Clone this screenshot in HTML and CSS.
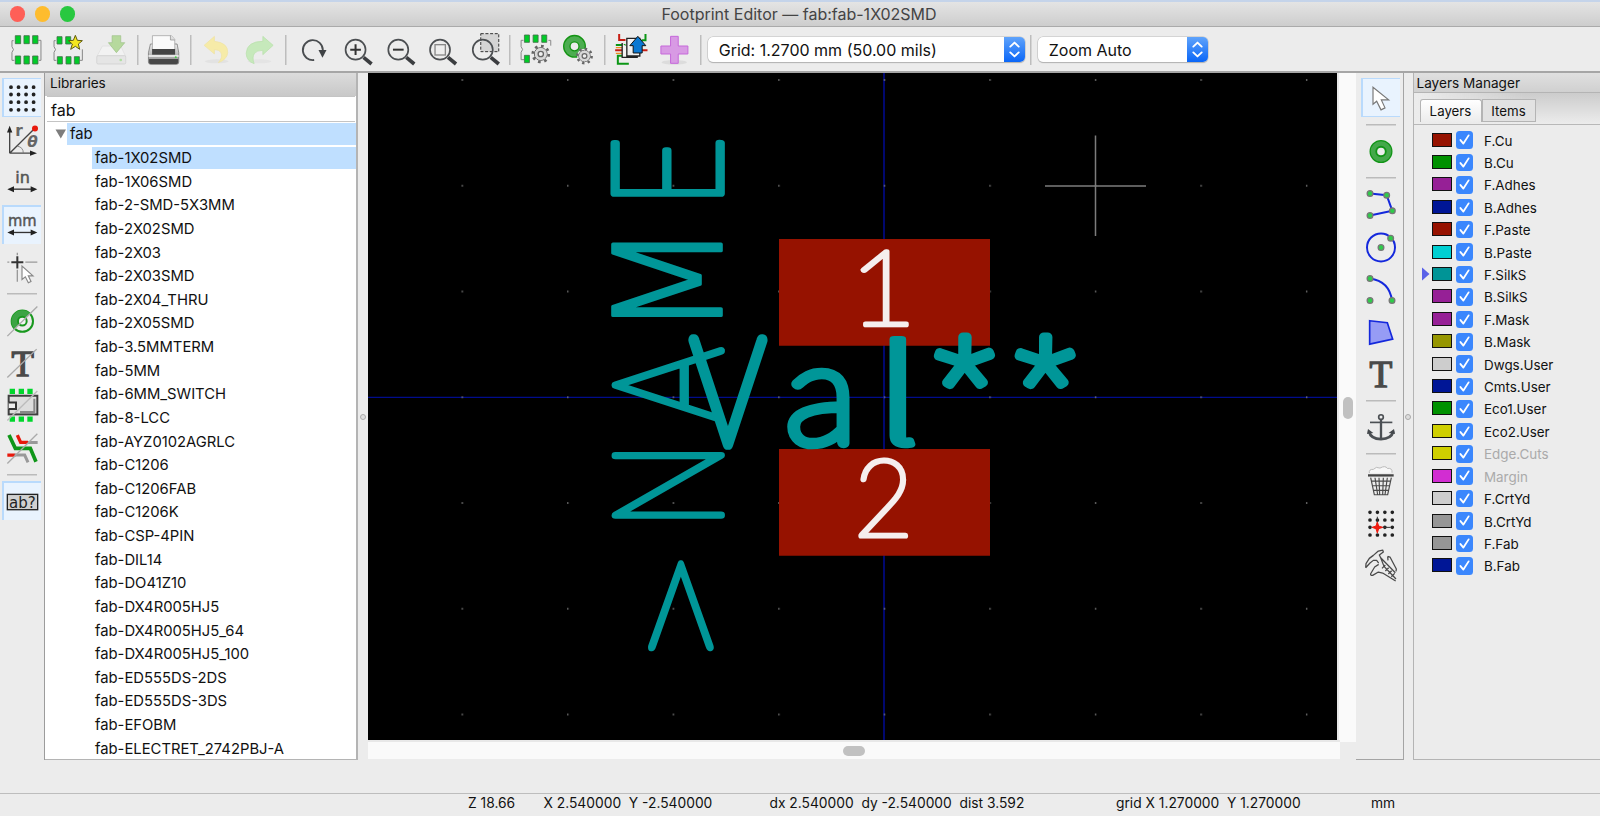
FILE: index.html
```html
<!DOCTYPE html>
<html lang="en">
<head>
<meta charset="utf-8">
<title>Footprint Editor — fab:fab-1X02SMD</title>
<link rel="stylesheet" href="styles.css">
</head>
<body>
<svg class="defs" aria-hidden="true">
  <symbol id="check" viewBox="0 0 18 18"><path d="M4.6 9.3l3 3.6 5.4-8.4" fill="none" stroke="#fff" stroke-width="1.9" stroke-linecap="round" stroke-linejoin="round"/></symbol>
  <symbol id="updown" viewBox="0 0 21 25"><path d="M6.3 9.6l4.2-4 4.2 4M6.3 15.4l4.2 4 4.2-4" fill="none" stroke="#fff" stroke-width="1.9" stroke-linecap="round" stroke-linejoin="round"/></symbol>
  <symbol id="gear" viewBox="-30 -30 60 60"><circle r="19" fill="#ddd" stroke="#555" stroke-width="3"/><circle r="24" fill="none" stroke="#666" stroke-width="8" stroke-dasharray="8 10.85"/><circle r="18" fill="#d8d8d8"/><circle r="8" fill="#eee" stroke="#666" stroke-width="4"/></symbol>
  <linearGradient id="printer" x2="0" y2="1"><stop offset="0" stop-color="#eee"/><stop offset="1" stop-color="#888"/></linearGradient>
</svg>
<div class="window">
  <header class="titlebar">
    <div class="lights"><i class="light red"></i><i class="light amber"></i><i class="light green"></i></div>
    <h1 class="title">Footprint Editor — fab:fab-1X02SMD</h1>
  </header>

  <nav class="toolbar">
    <svg class="tool" viewBox="14.1 102 127.8 96"><path d="M40 122H35V140Q44 149 35 157V181H42M114 121H122V181H116" fill="none" stroke="#888" stroke-width="3"/><path d="M45 107h16v24H45zM71 107h16v24H71zM97 107h16v24H97zM45 168h16v24H45zM71 168h16v24H71zM97 168h16v24H97z" fill="#00cc28" stroke="#44704a" stroke-width="2.5"/></svg>
    <svg class="tool" viewBox="141.9 102 127.8 96"><path d="M168 122H163V140Q172 149 163 157V181H170M248 148V181H240" fill="none" stroke="#888" stroke-width="3"/><path d="M172 110h15v22H172zM198 110h15v22H198zM173 170h15v22H173zM199 170h15v22H199zM224 170h15v22H224z" fill="#00cc28" stroke="#44704a" stroke-width="2.5"/><path d="M227 106l6 15 15 1-12 10 4 16-13-9-14 9 5-16-12-10 15-1z" fill="#f5e61e" stroke="#5d5a10" stroke-width="3"/></svg>
    <svg class="tool" viewBox="269.7 102 127.8 96"><path d="M307 138H362L376 168H291z" fill="#f2f2f2" stroke="#ddd" stroke-width="2"/><rect x="290" y="167" width="87" height="25" rx="4" fill="#e5e5e5" stroke="#ccc" stroke-width="2"/><circle cx="362" cy="180" r="4" fill="#b0dfa2"/><path d="M336 107H362V128H374L349 158 325 128H336z" fill="#b6d99d" stroke="#9dbf88" stroke-width="2"/></svg>
    <i class="sep"></i>
    <svg class="tool" viewBox="428.7 102 127.8 96"><path d="M451 132H531L536 158V186Q536 193 529 193H453Q445 193 445 186V158z" fill="url(#printer)" stroke="#666" stroke-width="2"/><path d="M457 107H514L524 118V150H457z" fill="#fafafa" stroke="#999" stroke-width="2"/><path d="M511 107V120H524" fill="#ddd" stroke="#888" stroke-width="2"/><rect x="456" y="147" width="69" height="17" fill="#444"/><path d="M445 168H536" stroke="#fff" stroke-width="4"/><path d="M447 177H534V185Q534 192 526 192H455Q447 192 447 185z" fill="#484848"/><circle cx="527" cy="172" r="3" fill="#4c4"/></svg>
    <i class="sep"></i>
    <svg class="tool" viewBox="587.7 102 127.8 96"><ellipse cx="650" cy="184" rx="36" ry="6" fill="#e2e2e2"/><path d="M612 136L643 109V124Q684 128 683 158 681 178 655 188 669 172 662 157 657 149 643 149V162z" fill="#f6eba8" stroke="#eee2a4" stroke-width="2"/></svg>
    <svg class="tool" viewBox="715.5 102 127.8 96"><ellipse cx="780" cy="184" rx="36" ry="6" fill="#e4e4e4"/><path d="M821 136L790 109V124Q742 124 740 160 741 184 764 191 757 172 765 160 772 151 790 151V164z" fill="#c6e9bb" stroke="#b6dfa9" stroke-width="2"/></svg>
    <i class="sep"></i>
    <svg class="tool" viewBox="4.5 102 127.8 96"><path d="M74 180A30 30 0 1 1 100 150" fill="none" stroke="#4a4d50" stroke-width="5.5"/><path d="M87 150H111L99 173z" fill="#3f4245"/></svg>
    <svg class="tool" viewBox="132.3 102 127.8 96"><circle cx="197" cy="149" r="30" fill="none" stroke="#4c4f52" stroke-width="5"/><path d="M181 149H213M197 133V165" stroke="#333" stroke-width="6"/><path d="M221 172L245 192" stroke="#3b3d40" stroke-width="11"/></svg>
    <svg class="tool" viewBox="260.1 102 127.8 96"><circle cx="324" cy="149" r="30" fill="none" stroke="#4c4f52" stroke-width="5"/><path d="M308 149H340" stroke="#333" stroke-width="6"/><path d="M348 172L372 192" stroke="#3b3d40" stroke-width="11"/></svg>
    <svg class="tool" viewBox="387.9 102 127.8 96"><circle cx="451" cy="149" r="30" fill="none" stroke="#4c4f52" stroke-width="5"/><rect x="436" y="134" width="31" height="31" fill="#eee" stroke="#888" stroke-width="4"/><path d="M475 172L499 192" stroke="#3b3d40" stroke-width="11"/></svg>
    <svg class="tool" viewBox="515.7 102 127.8 96"><rect x="572" y="101" width="54" height="54" fill="#d4d4d4" stroke="#333" stroke-width="3" stroke-dasharray="9 5"/><circle cx="578" cy="149" r="30" fill="none" stroke="#4c4f52" stroke-width="5"/><path d="M602 172L626 192" stroke="#3b3d40" stroke-width="11"/></svg>
    <i class="sep"></i>
    <svg class="tool" viewBox="674.7 102 127.8 96"><path d="M700 121H693V140Q702 148 693 157V179H702M775 121H782V137" fill="none" stroke="#888" stroke-width="3"/><path d="M703 105h15v22H703zM729 105h15v22H729zM755 105h15v22H755zM703 166h15v22H703z" fill="#00cc28" stroke="#44704a" stroke-width="2.5"/><use href="#gear" x="722" y="132" width="60" height="60"/></svg>
    <svg class="tool" viewBox="802.5 102 127.8 96"><circle cx="855" cy="139" r="23" fill="none" stroke="#149414" stroke-width="23"/><circle cx="855" cy="139" r="23" fill="none" stroke="#4cad50" stroke-width="15"/><circle cx="885" cy="168" r="22" fill="#ececec"/><use href="#gear" x="858" y="141" width="54" height="54"/></svg>
    <i class="sep"></i>
    <svg class="tool" viewBox="961.5 100 127.8 96"><path d="M989 100V118H1008M977 149H1008M1050 149H1074" fill="none" stroke="#c81e14" stroke-width="6"/><path d="M979 133H1008M1068 100V119H1056M1010 165H985V189H1018" fill="none" stroke="#0b9614" stroke-width="6"/><path d="M979 141H1008M979 158H1006" stroke="#f08c1e" stroke-width="4"/><path d="M1012 113H1051V166H1012zM998 127V170H1045" fill="#f3f3f3" stroke="#222" stroke-width="4"/><path d="M1045 107L1069 135H1058V157H1031V135H1021z" fill="#0a78d2" stroke="#111" stroke-width="3"/></svg>
    <svg class="tool" viewBox="1089.3 102 127.8 96"><ellipse cx="1153" cy="187" rx="38" ry="7" fill="#dcdcdc"/><path d="M1142 109H1165V138H1194V162H1165V190H1142V162H1113V138H1142z" fill="#d89ae4" stroke="#c668da" stroke-width="3"/></svg>
    <i class="sep"></i>
    <div class="select grid-select"><span>Grid: 1.2700 mm (50.00 mils)</span><svg class="knob"><use href="#updown"/></svg></div>
    <i class="sep select-sep"></i>
    <div class="select zoom-select"><span>Zoom Auto</span><svg class="knob"><use href="#updown"/></svg></div>
  </nav>

  <main class="work">
    <aside class="rail left-rail">
      <svg class="cell on" viewBox="0 20.4 132 127"><g stroke="#222" stroke-width="11.5" stroke-linecap="round" stroke-dasharray="0 22.6"><path d="M33 51H102M33 73H102M33 96H102M33 119H102"/></g></svg>
      <svg class="cell" viewBox="0 147.5 132 127"><path d="M29 250V182M29 250H94M29 250L103 177" fill="none" stroke="#444" stroke-width="4"/><path d="M29 168L37 188H21zM111 250L90 258V242z" fill="#222"/><path d="M52 229Q70 232 70 250" fill="none" stroke="#777" stroke-width="2.5"/><circle cx="105" cy="176" r="9" fill="#e8190c"/><text x="46" y="200" class="gl" font-size="46">r</text><text x="82" y="232" class="gl it" font-size="46">θ</text></svg>
      <svg class="cell" viewBox="0 274.5 132 127"><text x="68" y="341" class="gl unit" font-size="48" text-anchor="middle">in</text><path d="M30 359H104" stroke="#333" stroke-width="4"/><path d="M22 359L42 350V368zM112 359L92 350V368z" fill="#222"/></svg>
      <svg class="cell on" viewBox="0 401.6 132 127"><text x="67" y="468" class="gl unit" font-size="48" text-anchor="middle" textLength="86" lengthAdjust="spacingAndGlyphs">mm</text><path d="M30 487H104" stroke="#333" stroke-width="4"/><path d="M22 487L42 478V496zM112 487L92 478V496z" fill="#222"/></svg>
      <svg class="cell" viewBox="0 528.6 132 127"><path d="M22 577H28M76 577H112M52 549V556M52 600V636" stroke="#999" stroke-width="4"/><path d="M34 577H70M52 559V596" stroke="#333" stroke-width="6"/><path d="M66 589V629L76 621 85 639 93 635 85 618H99z" fill="#fff" stroke="#888" stroke-width="3.5"/></svg>
      <i class="rule"></i>
      <svg class="cell" viewBox="0 28.6 132 127"><circle cx="67" cy="92" r="32" fill="#ececec" stroke="#18981e" stroke-width="6"/><path d="M44 115A32 32 0 0 1 90 69L78 81 56 103z" fill="#3ca444"/><circle cx="67" cy="92" r="13" fill="#f4f4f4" stroke="#18981e" stroke-width="6"/><path d="M22 137L112 48" stroke="#aaa" stroke-width="4"/></svg>
      <svg class="cell" viewBox="0 155.7 132 127"><text x="68" y="257" class="gs" font-size="110" text-anchor="middle">T</text><path d="M22 262L110 177" stroke="#aaa" stroke-width="4"/></svg>
      <svg class="cell" viewBox="0 282.8 132 127"><path d="M29 297h16v16H29zM56 297h16v16H56zM82 297h16v16H82zM29 380h16v16H29zM56 380h16v16H56zM82 380h16v16H82z" fill="#00d62c"/><rect x="26" y="318" width="86" height="56" fill="#ddd" stroke="#3f3f3f" stroke-width="6"/><path d="M26 338H48V358H26" fill="#eee" stroke="#333" stroke-width="6"/><path d="M60 367H103V327" fill="none" stroke="#888" stroke-width="6"/><path d="M22 392L112 304" stroke="#bbb" stroke-width="4"/></svg>
      <svg class="cell" viewBox="0 409.8 132 127"><path d="M52 434L62 456H84M22 494H46" fill="none" stroke="#e8190c" stroke-width="10"/><path d="M84 456H113M44 494H74L84 516" fill="none" stroke="#999" stroke-width="9"/><path d="M27 434L46 474H91L108 514" fill="none" stroke="#0f9618" stroke-width="11"/><path d="M22 519L112 430" stroke="#aaa" stroke-width="4"/></svg>
      <i class="rule"></i>
      <svg class="cell on" viewBox="0 569.9 132 127"><rect x="22" y="613" width="91" height="46" fill="#d0d0d0" stroke="#222" stroke-width="4"/><text x="67" y="653" class="gl thin" font-size="45" text-anchor="middle" textLength="80" lengthAdjust="spacingAndGlyphs">ab?</text></svg>
    </aside>

    <section class="libraries">
      <h2 class="caption">Libraries</h2>
      <div class="search">fab</div>
      <ul class="tree">
        <li class="root"><i class="twisty"></i><span class="label sel">fab</span></li>
        <li class="label sel">fab-1X02SMD</li><li class="label">fab-1X06SMD</li><li class="label">fab-2-SMD-5X3MM</li><li class="label">fab-2X02SMD</li><li class="label">fab-2X03</li><li class="label">fab-2X03SMD</li><li class="label">fab-2X04_THRU</li><li class="label">fab-2X05SMD</li><li class="label">fab-3.5MMTERM</li><li class="label">fab-5MM</li><li class="label">fab-6MM_SWITCH</li><li class="label">fab-8-LCC</li><li class="label">fab-AYZ0102AGRLC</li><li class="label">fab-C1206</li><li class="label">fab-C1206FAB</li><li class="label">fab-C1206K</li><li class="label">fab-CSP-4PIN</li><li class="label">fab-DIL14</li><li class="label">fab-DO41Z10</li><li class="label">fab-DX4R005HJ5</li><li class="label">fab-DX4R005HJ5_64</li><li class="label">fab-DX4R005HJ5_100</li><li class="label">fab-ED555DS-2DS</li><li class="label">fab-ED555DS-3DS</li><li class="label">fab-EFOBM</li><li class="label">fab-ELECTRET_2742PBJ-A</li>
      </ul>
    </section>
    <div class="sash"><i class="grip"></i></div>

    <section class="editor">
      <svg class="canvas" viewBox="368 73 969 667">
        <defs><pattern id="dots" x="356" y="79" width="105.55" height="105.75" patternUnits="userSpaceOnUse"><rect x="0" y="0.3" width="1.4" height="1.4" fill="#8a8a8a"/></pattern></defs>
        <path d="M368 397.3H1337" stroke="#000c8c" stroke-width="1.2"/><path d="M884 73V740" stroke="#00087a" stroke-width="1.8"/>
        <rect x="368" y="73" width="969" height="667" fill="url(#dots)"/>
        <path d="M779 239H990V345.7H779zM779 449H990V555.7H779z" fill="#961200"/>
        <g class="pad-text"><text transform="matrix(1.162 0 0 1.044 849.3 325)">1</text><text transform="matrix(1.023 0 0 1.055 854 536.4)">2</text></g>
        <g class="silk"><text transform="matrix(0 -2.27 1.59 0 734 675)">&gt;</text><text transform="matrix(0 -1.173 1.5 0 721.3 529.2)">N</text><text transform="matrix(0 -1.176 1.5 0 721.3 422.6)">A</text><text class="dejavu" transform="matrix(0 -1.315 1.48 0 721.3 336.4)">M</text><text transform="matrix(0 -1.237 1.52 0 721.3 207.9)">E</text></g>
        <g class="silk bold"><text transform="matrix(1.176 0 0 1.475 690.4 444)">V</text><text transform="matrix(1.527 0 0 1.394 784.9 443.3)">a</text><text class="tailed" transform="matrix(1.94 0 0 1.31 874 443)">l</text><text class="star" transform="matrix(1.316 0 0 1.216 936.7 424.4)">*</text><text class="star" transform="matrix(1.316 0 0 1.216 1017.4 424.4)">*</text></g>
        <path d="M1045 186H1146M1095.5 135.5V236" stroke="#7c7c7c" stroke-width="1.5"/>
      </svg>
      <div class="vscroll"><i class="thumb"></i></div>
      <div class="hscroll"><i class="thumb"></i></div>
    </section>

    <aside class="rail right-rail">
      <svg class="cell on" viewBox="87 50.4 132 127"><path d="M129 81V132L140 123 153 149 165 143 154 119H176z" fill="#fff" stroke="#777" stroke-width="3.5"/></svg>
      <i class="rule"></i>
      <svg class="cell" viewBox="87 210.5 132 127"><circle cx="153" cy="275" r="23" fill="none" stroke="#119516" stroke-width="23"/><circle cx="153" cy="275" r="24" fill="none" stroke="#44a84a" stroke-width="14"/></svg>
      <i class="rule"></i>
      <svg class="cell" viewBox="87 370.5 132 127"><path d="M120 402L170 407 187 454 120 468" fill="none" stroke="#1428dc" stroke-width="6"/><g class="nodes"><circle cx="120" cy="402" r="8.5"/><circle cx="170" cy="407" r="8.5"/><circle cx="187" cy="454" r="8.5"/><circle cx="120" cy="468" r="8.5"/></g></svg>
      <svg class="cell" viewBox="87 497.6 132 127"><circle cx="153" cy="562" r="42" fill="none" stroke="#1428dc" stroke-width="6"/><g class="nodes"><circle cx="153" cy="562" r="8.5"/><circle cx="182" cy="534" r="8.5"/></g></svg>
      <svg class="cell" viewBox="87 624.6 132 127"><path d="M120 656Q178 664 186 722" fill="none" stroke="#1428dc" stroke-width="6"/><g class="nodes"><circle cx="120" cy="656" r="8.5"/><circle cx="186" cy="722" r="8.5"/><circle cx="120" cy="722" r="8.5"/></g></svg>
      <svg class="cell" viewBox="87 61.7 132 127"><path d="M119 91L172 97 188 146 119 161z" fill="#969cf5" stroke="#1428dc" stroke-width="5"/></svg>
      <svg class="cell" viewBox="87 188.7 132 127"><text x="153" y="290" class="gs" font-size="112" text-anchor="middle">T</text></svg>
      <i class="rule"></i>
      <svg class="cell" viewBox="87 348.8 132 127"><g fill="none" stroke="#4c5054" stroke-width="5"><circle cx="153" cy="382" r="7"/><path d="M120 398H187"/><path d="M153 390V446" stroke-width="7"/><path d="M117 425Q122 448 153 448 184 448 190 425" stroke-width="8"/></g><path d="M111 433L114 418 130 430zM195 433L192 418 176 430z" fill="#44484c"/></svg>
      <i class="rule"></i>
      <svg class="cell" viewBox="87 508.8 132 127"><path d="M118 548Q116 536 130 537 138 527 150 533 166 524 172 534 188 532 186 547" fill="#f7f7f7" stroke="#bbb" stroke-width="3"/><path d="M114 555H191" stroke="#444" stroke-width="7"/><path d="M122 562L133 613H173L184 562M135 562L143 613M147 562L149 613M160 562L158 613M172 562L165 613M123 572H182M126 586H180M129 600H177" fill="none" stroke="#4a4a4a" stroke-width="3.5"/></svg>
      <svg class="cell" viewBox="87 635.9 132 127"><g stroke="#222" stroke-width="11" stroke-linecap="round" stroke-dasharray="0 22.3"><path d="M120 667H188M120 690H188M120 712H188M120 735H188"/></g><path d="M142 680V712H182" fill="none" stroke="#333" stroke-width="3"/><path d="M142 696L146 708 158 712 146 716 142 729 138 716 126 712 138 708z" fill="#f01c10" stroke="#f01c10" stroke-width="3"/></svg>
      <svg class="cell" viewBox="87 762.9 132 127"><path d="M107 834L108 822 118 806 130 797 145 784 158 781 160 787 148 796 152 804 196 849M107 834L120 820 130 812 140 812 146 820M122 852Q120 857 128 857L145 847 158 850 197 874M122 852L134 832 146 824M152 804L162 830 198 868M173 800L180 802 199 838 198 845M173 800L174 812M156 836l10-10M166 844l10-10M175 853l10-10M184 861l10-10" fill="none" stroke="#4a4a4a" stroke-width="3.8" stroke-linejoin="round"/></svg>
    </aside>
    <div class="sash right-sash"><i class="grip"></i></div>

    <section class="layers">
      <h2 class="caption">Layers Manager</h2>
      <div class="tabs"><span class="tab active">Layers</span><span class="tab">Items</span></div>
      <ul class="layer-list">
        <li><i class="sw c-red"></i><svg class="box"><use href="#check"/></svg>F.Cu</li>
        <li><i class="sw c-green"></i><svg class="box"><use href="#check"/></svg>B.Cu</li>
        <li><i class="sw c-purple"></i><svg class="box"><use href="#check"/></svg>F.Adhes</li>
        <li><i class="sw c-blue"></i><svg class="box"><use href="#check"/></svg>B.Adhes</li>
        <li><i class="sw c-red"></i><svg class="box"><use href="#check"/></svg>F.Paste</li>
        <li><i class="sw c-cyan"></i><svg class="box"><use href="#check"/></svg>B.Paste</li>
        <li class="current"><i class="sw c-teal"></i><svg class="box"><use href="#check"/></svg>F.SilkS</li>
        <li><i class="sw c-purple"></i><svg class="box"><use href="#check"/></svg>B.SilkS</li>
        <li><i class="sw c-purple"></i><svg class="box"><use href="#check"/></svg>F.Mask</li>
        <li><i class="sw c-olive"></i><svg class="box"><use href="#check"/></svg>B.Mask</li>
        <li><i class="sw c-light"></i><svg class="box"><use href="#check"/></svg>Dwgs.User</li>
        <li><i class="sw c-blue"></i><svg class="box"><use href="#check"/></svg>Cmts.User</li>
        <li><i class="sw c-green"></i><svg class="box"><use href="#check"/></svg>Eco1.User</li>
        <li><i class="sw c-yellow"></i><svg class="box"><use href="#check"/></svg>Eco2.User</li>
        <li class="off"><i class="sw c-yellow"></i><svg class="box"><use href="#check"/></svg>Edge.Cuts</li>
        <li class="off"><i class="sw c-magenta"></i><svg class="box"><use href="#check"/></svg>Margin</li>
        <li><i class="sw c-light"></i><svg class="box"><use href="#check"/></svg>F.CrtYd</li>
        <li><i class="sw c-gray"></i><svg class="box"><use href="#check"/></svg>B.CrtYd</li>
        <li><i class="sw c-gray"></i><svg class="box"><use href="#check"/></svg>F.Fab</li>
        <li><i class="sw c-blue"></i><svg class="box"><use href="#check"/></svg>B.Fab</li>
      </ul>
    </section>
  </main>

  <footer class="status"><span>Z 18.66</span><span>X 2.540000  Y -2.540000</span><span>dx 2.540000  dy -2.540000  dist 3.592</span><span>grid X 1.270000  Y 1.270000</span><span>mm</span></footer>
</div>
</body>
</html>
```
FILE: styles.css
```css
* { box-sizing: border-box; margin: 0; padding: 0; }
body { font-family: Inter, "Liberation Sans", sans-serif; color: #111; background: #ececec; overflow: hidden; }
.defs { position: absolute; width: 0; height: 0; }
ul { list-style: none; }
.window { width: 1600px; height: 816px; display: flex; flex-direction: column; background: #ececec; border-top: 2px solid #c5d4ea; }

.titlebar { height: 25px; display: grid; grid-template-columns: 200px 1fr 200px; align-items: center; background: linear-gradient(#e4e4e4, #cdcdcd); border-bottom: 1px solid #aaa; }
.lights { display: flex; gap: 9.5px; padding-left: 10px; }
.light { width: 15.4px; height: 15.4px; border-radius: 50%; }
.red { background: #fe5f57; }
.amber { background: #febc2e; }
.green { background: #28c840; }
.title { font-size: 16px; font-weight: 400; text-align: center; color: #444; line-height: 24px; padding-right: 2px; }

.toolbar { height: 46px; display: flex; align-items: center; padding: 1px 0 0 4.7px; border-bottom: 2px solid #a6a6a6; }
.tool { width: 42.6px; height: 32px; flex: none; overflow: visible; }
.sep { width: 10.4px; height: 30px; flex: none; background: linear-gradient(#bdbdbd, #bdbdbd) center / 1.5px 100% no-repeat; }
.select { height: 25px; display: flex; align-items: center; justify-content: space-between; background: #fff; border-radius: 5px; box-shadow: 0 0 0 .5px #bbb, 0 1px 1px #aaa; font-size: 16px; padding-left: 11px; white-space: pre; overflow: hidden; }
.grid-select { width: 317px; margin-left: 1.8px; }
.zoom-select { width: 170px; }
.select-sep { width: 13px; }
.knob { width: 21px; height: 25px; background: linear-gradient(#5fa3fb, #0a66f7); }

.work { height: 687px; display: flex; }
.rail { display: flex; flex-direction: column; padding-top: 3.8px; flex: none; }
.left-rail { width: 45px; border-right: 1.5px solid #9c9c9c; }
.right-rail { width: 47.5px; padding-left: 3px; border-right: 1.5px solid #a4a4a4; border-bottom: 1px solid #a4a4a4; }
.cell { width: 44px; height: 42.35px; flex: none; }
.on { background: linear-gradient(#e9f3fe, #e9f3fe) center / 37px 37px no-repeat, linear-gradient(#b9dafc, #b9dafc) center / 39.4px 39.4px no-repeat; }
.rule { width: 44px; height: 11px; flex: none; background: linear-gradient(#bbb, #bbb) center / 30px 1.5px no-repeat; }
.gl { font-family: "DejaVu Sans", sans-serif; font-weight: 700; fill: #666; }
.unit { font-weight: 400; fill: #555; stroke: #555; stroke-width: 1.5px; }
.it { font-style: italic; }
.thin { font-weight: 400; fill: #222; }
.gs { font-family: "Liberation Serif", serif; fill: #4a4a4a; stroke: #4a4a4a; stroke-width: 4px; }
.nodes circle { fill: #2ecc4a; stroke: #777; stroke-width: 4; }

.caption { height: 22.5px; font-size: 13.6px; font-weight: 400; line-height: 20px; background: linear-gradient(#dcdcdc, #c8c8c8); flex: none; }
.libraries { width: 313px; display: flex; flex-direction: column; background: #fff; border-right: 2px solid #b4b4b4; border-bottom: 1.5px solid #b4b4b4; }
.libraries .caption { padding-left: 5px; }
.search { height: 26px; margin: 0 1px 0 2px; padding-left: 4px; border-bottom: 1.5px solid #c4c4c4; border-top: 1px solid #c4c4c4; font-size: 16px; line-height: 27px; flex: none; }
.tree { display: flex; flex-direction: column; padding: .9px 0 0 2px; font-size: 14.8px; overflow: hidden; }
.tree li { height: 23.63px; flex: none; }
.tree .label { line-height: 22px; padding-left: 3px; border-top: 1.5px solid #fff; border-bottom: 1.2px solid #fff; }
.tree li.label { margin-left: 45px; line-height: 23px; }
.root { display: flex; }
.root .label { flex: 1; }
.tree .sel { background: #bfdfff; }
.twisty { width: 20px; background: #7d7d7d; clip-path: polygon(8.5px 7px, 19px 7px, 13.8px 16px); }
.sash { width: 10px; display: flex; align-items: center; justify-content: center; flex: none; }
.grip { width: 6px; height: 6px; border: 1px solid #aaa; border-radius: 50%; background: #ddd; }

.editor { width: 988px; height: 686px; display: grid; grid-template: 667px 19px / 969px 19px; flex: none; }
.canvas { width: 969px; height: 667px; background: #000; }
.vscroll { background: #fafafa; display: flex; justify-content: center; border-left: 2px solid #e8e8e8; padding-top: 324px; margin-bottom: -2px; }
.vscroll .thumb { width: 10px; height: 22px; }
.hscroll { background: #fafafa; border-top: 2px solid #e8e8e8; display: flex; align-items: center; padding-left: 475px; margin-right: -3px; }
.hscroll .thumb { width: 22px; height: 10px; }
.thumb { border-radius: 5px; background: #c1c1c1; }
.canvas text { font: 100 100px Lato; vector-effect: non-scaling-stroke; stroke-linejoin: round; stroke-linecap: round; }
.canvas .dejavu { font: 200 100px "DejaVu Sans"; stroke-width: 3.4px; }
.canvas .tailed { font: 100 100px "Noto Sans CJK JP"; stroke-width: 8.2px; }
.canvas .star { font: 100 100px Roboto; stroke-width: 9.4px; }
.pad-text { fill: #f5eeee; stroke: #f5eeee; stroke-width: 5px; }
.silk { fill: #009698; stroke: #009698; stroke-width: 7px; }
.bold { stroke-width: 10.6px; }

.right-sash { width: 9px; }
.layers { flex: 1; border-left: 1.5px solid #b4b4b4; border-bottom: 1.5px solid #b4b4b4; }
.layers .caption { height: 20px; line-height: 20px; padding-left: 3px; border-bottom: 1px solid #b4b4b4; background: linear-gradient(#e0e0e0, #d0d0d0); }
.tabs { display: flex; height: 32px; padding: 6px 0 0 6px; font-size: 13.3px; background: linear-gradient(90deg, #ececec, transparent 60%), linear-gradient(#ccc, #ececec); border-bottom: 1px solid #b8b8b8; align-items: flex-start; }
.tab { height: 23px; line-height: 23px; width: 54px; text-align: center; border: 1.5px solid #b4b4b4; border-left-width: 1px; background: #e2e2e2; }
.tab.active { width: 62px; background: linear-gradient(#fff, #ececec); border-bottom: 0; border-radius: 3px 3px 0 0; }
.layer-list { padding: 4.4px 0 0; }
.layer-list li { height: 22.42px; display: flex; align-items: center; padding-left: 18px; font-size: 13.4px; line-height: 24px; }
.sw { width: 20px; height: 14px; border: 1.5px solid #111; margin: -2px 4px 0 0; }
.box { width: 17.5px; height: 17.5px; border-radius: 3.5px; background: #3b87fd; margin: -1px 11px 0 0; }
.off { color: #aaa; }
.layer-list .current { padding-left: 8px; }
.current::before { content: ""; width: 8px; height: 14px; margin: -2px 2px 0 0; background: #5a62e8; clip-path: polygon(0 0, 100% 50%, 0 100%); }
.c-red { background: #961200; }
.c-green { background: #009100; }
.c-purple { background: #962096; }
.c-blue { background: #001696; }
.c-cyan { background: #00cfd2; }
.c-teal { background: #009496; }
.c-olive { background: #969600; }
.c-light { background: #cdcdcd; }
.c-yellow { background: #cfcf00; }
.c-magenta { background: #d22dd2; }
.c-gray { background: #969696; }

.status { margin-top: 33px; height: 23px; display: grid; grid-template-columns: 75.5px 226px 346.5px 255px auto; padding-left: 468px; border-top: 1.5px solid #bdbdbd; font-size: 13.8px; line-height: 19px; white-space: pre; }
```
